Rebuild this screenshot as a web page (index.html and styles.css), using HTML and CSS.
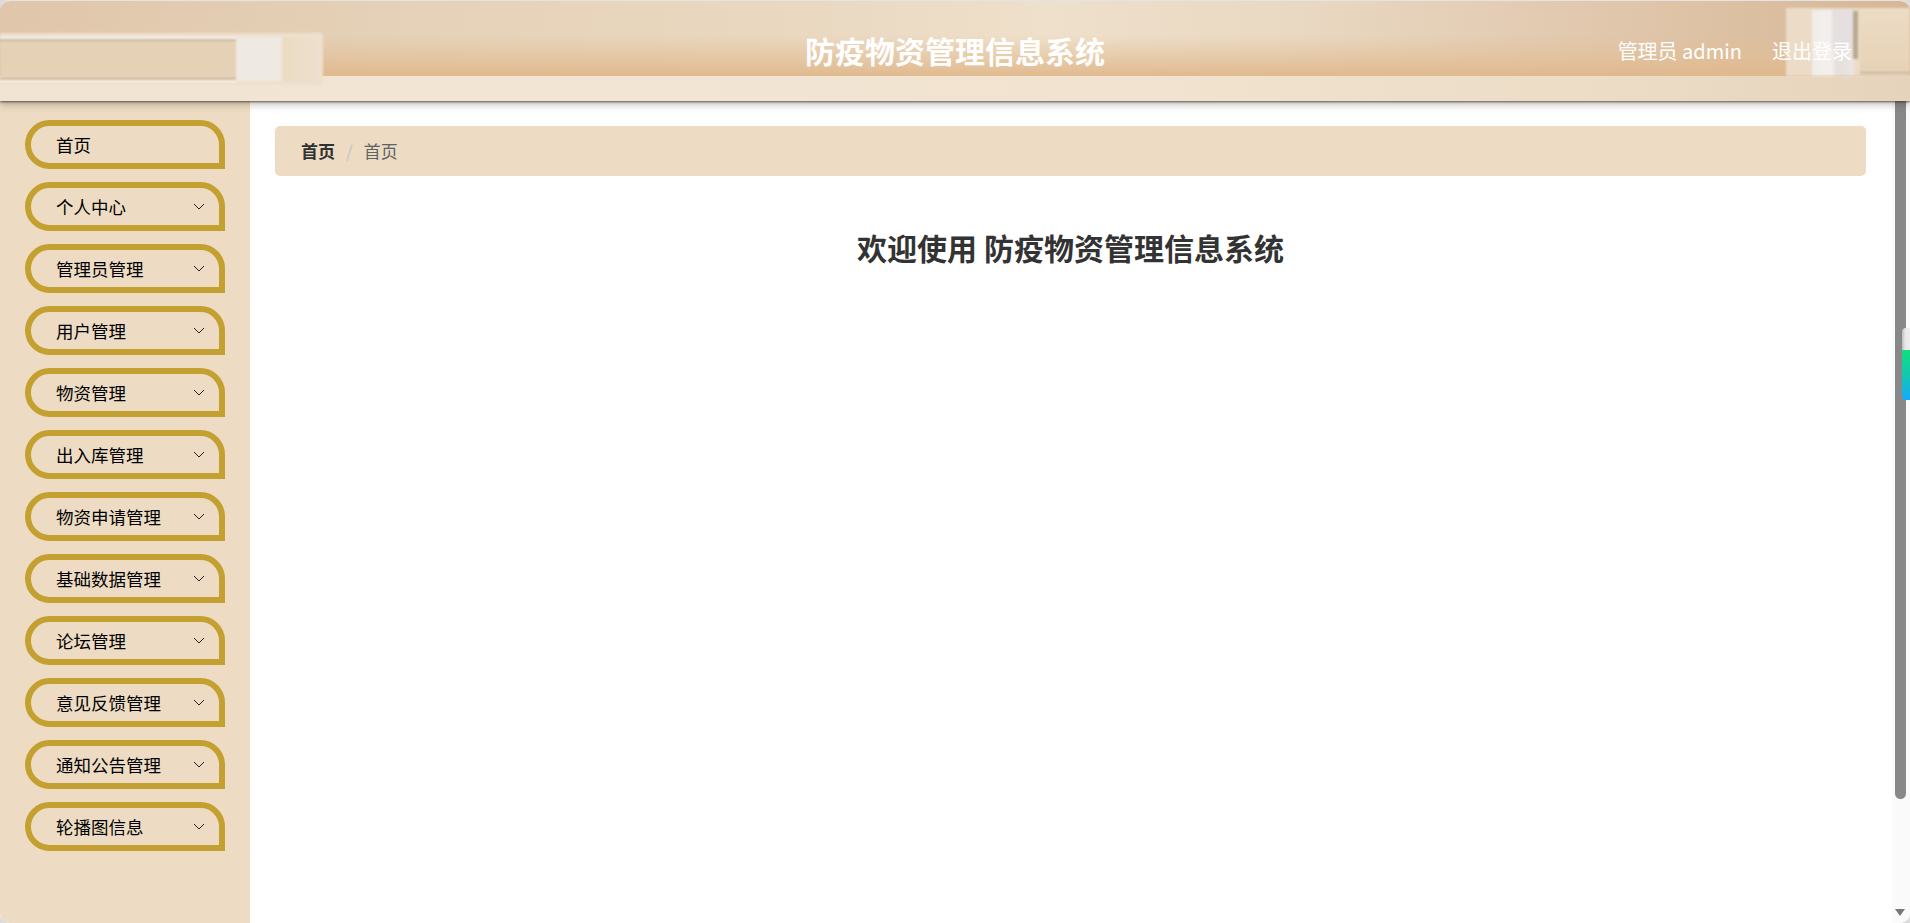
FILE: index.html
```html
<!DOCTYPE html>
<html lang="zh-CN">
<head>
<meta charset="utf-8">
<title>防疫物资管理信息系统</title>
<link rel="stylesheet" href="styles.css">
</head>
<body>
<div class="window">
  <header class="topbar">
    <div class="deco-left">
      <div class="deco-left-panel"></div>
      <div class="deco-left-white"></div>
      <div class="deco-left-end"></div>
    </div>
    <div class="deco-right">
      <div class="deco-right-white"></div>
      <div class="deco-right-lilac"></div>
      <div class="deco-right-bar"></div>
      <div class="deco-right-panel"></div>
    </div>
    <h1 class="brand">防疫物资管理信息系统</h1>
    <div class="user">
      <span class="user-name">管理员 admin</span>
      <span class="logout">退出登录</span>
    </div>
  </header>
  <div class="body">
    <nav class="sidebar">
      <div class="menu-item"><span>首页</span></div>
      <div class="menu-item"><span>个人中心</span><svg class="chev" viewBox="0 0 12 7"><path d="M1 1l5 5 5-5"/></svg></div>
      <div class="menu-item"><span>管理员管理</span><svg class="chev" viewBox="0 0 12 7"><path d="M1 1l5 5 5-5"/></svg></div>
      <div class="menu-item"><span>用户管理</span><svg class="chev" viewBox="0 0 12 7"><path d="M1 1l5 5 5-5"/></svg></div>
      <div class="menu-item"><span>物资管理</span><svg class="chev" viewBox="0 0 12 7"><path d="M1 1l5 5 5-5"/></svg></div>
      <div class="menu-item"><span>出入库管理</span><svg class="chev" viewBox="0 0 12 7"><path d="M1 1l5 5 5-5"/></svg></div>
      <div class="menu-item"><span>物资申请管理</span><svg class="chev" viewBox="0 0 12 7"><path d="M1 1l5 5 5-5"/></svg></div>
      <div class="menu-item"><span>基础数据管理</span><svg class="chev" viewBox="0 0 12 7"><path d="M1 1l5 5 5-5"/></svg></div>
      <div class="menu-item"><span>论坛管理</span><svg class="chev" viewBox="0 0 12 7"><path d="M1 1l5 5 5-5"/></svg></div>
      <div class="menu-item"><span>意见反馈管理</span><svg class="chev" viewBox="0 0 12 7"><path d="M1 1l5 5 5-5"/></svg></div>
      <div class="menu-item"><span>通知公告管理</span><svg class="chev" viewBox="0 0 12 7"><path d="M1 1l5 5 5-5"/></svg></div>
      <div class="menu-item"><span>轮播图信息</span><svg class="chev" viewBox="0 0 12 7"><path d="M1 1l5 5 5-5"/></svg></div>
    </nav>
    <main class="main">
      <div class="crumbs">
        <span class="crumb-strong">首页</span>
        <span class="crumb-sep">/</span>
        <span class="crumb-page">首页</span>
      </div>
      <h2 class="welcome">欢迎使用 防疫物资管理信息系统</h2>
    </main>
    <div class="scroll">
      <div class="scroll-thumb"></div>
      <div class="scroll-arrow"></div>
      <div class="side-widget"><div class="side-widget-top"></div><div class="side-widget-color"></div></div>
    </div>
  </div>
</div>
</body>
</html>
```
FILE: styles.css
```css
* { box-sizing: border-box; }
html, body { margin: 0; height: 100%; }
body {
  background: #dcdcdc;
  overflow: hidden;
  font-family: "Noto Sans CJK SC", "Noto Sans", sans-serif;
}
.window {
  height: 923px;
  display: flex;
  flex-direction: column;
  background: #fff;
  border-top: 1px solid #e4e4e4;
  border-radius: 10px;
  overflow: hidden;
}
.topbar {
  position: relative;
  z-index: 2;
  flex: 0 0 100px;
  display: flex;
  align-items: flex-start;
  justify-content: center;
  box-shadow: 0 1px 2px rgba(50,42,34,.7), 0 4px 7px rgba(60,50,40,.28);
  background:
    linear-gradient(90deg, #f2e4d2 0, #f2e5d4 30%, #f1e3cf 60%, #ecdcc6 85%, #e6d3bb 100%) left bottom / 100% 25px no-repeat,
    linear-gradient(180deg, rgba(224,178,128,0) 34%, rgba(226,190,148,.55) 55%, rgba(224,184,140,.95) 75%),
    linear-gradient(90deg, #e0c6aa 0, #e5d2b8 22%, #e9d7bf 40%, #efe0cb 55%, #e9d8c2 68%, #e0c6ab 85%, #d6b795 100%);
}
.deco-left {
  position: absolute;
  left: 0;
  top: 32px;
  width: 323px;
  height: 52px;
  background: #eee0cd;
  filter: blur(.8px);
}
.deco-left-panel {
  position: absolute;
  left: 0;
  top: 6px;
  width: 236px;
  height: 41px;
  background: #e5d2b6;
  border-top: 2px solid #c9b69c;
  border-bottom: 2px solid #c9b69c;
  box-shadow: 0 -2px 0 #faf6f0, 0 2px 0 #faf6f0;
}
.deco-left-white {
  position: absolute;
  left: 236px;
  top: 4px;
  width: 45px;
  height: 44px;
  background: #eee9e3;
}
.deco-left-end {
  position: absolute;
  left: 283px;
  top: 5px;
  width: 37px;
  height: 43px;
  background: linear-gradient(90deg, #e9dcc0, #efdfcf);
}
.deco-right {
  position: absolute;
  left: 1786px;
  top: 7px;
  width: 124px;
  height: 68px;
  background: #ecdcc7;
  filter: blur(1px);
}
.deco-right-white {
  position: absolute;
  left: 26px;
  top: 2px;
  width: 42px;
  height: 66px;
  background: linear-gradient(90deg, #f1ede8 0, #f3f0ee 45%, #e6dfdc 60%, #ebe6e2 100%);
}
.deco-right-lilac {
  position: absolute;
  left: 46px;
  top: 2px;
  width: 22px;
  height: 40px;
  background: #e6dfdf;
}
.deco-right-bar {
  position: absolute;
  left: 67px;
  top: 3px;
  width: 5px;
  height: 48px;
  background: #b8aa92;
}
.deco-right-panel {
  position: absolute;
  left: 74px;
  top: 4px;
  right: 0;
  height: 62px;
  background: linear-gradient(180deg, #ecdcc4, #e6d2b6);
  border-bottom: 2px solid #c8b69e;
}
.brand {
  position: relative;
  margin: 27px 0 0;
  color: #fff;
  font-size: 30px;
  line-height: 44px;
  font-weight: 700;
}
.user {
  position: absolute;
  top: 36px;
  right: 58px;
  display: flex;
  gap: 30px;
  color: #fff;
  font-size: 20px;
  line-height: 28px;
}
.body {
  flex: 1;
  display: flex;
  min-height: 0;
}
.sidebar {
  flex: 0 0 250px;
  display: flex;
  flex-direction: column;
  gap: 13px;
  padding: 19px 0 0 25px;
  background: #eddcc3;
}
.menu-item {
  width: 200px;
  height: 49px;
  display: flex;
  align-items: center;
  justify-content: space-between;
  padding: 0 14px 1px 25px;
  border: 6px solid #c3a02f;
  border-radius: 25px 25px 0 25px;
  color: #000;
  font-size: 17.5px;
  white-space: nowrap;
}
.chev {
  width: 12px;
  height: 7px;
  fill: none;
  stroke: #222;
  stroke-width: 1;
}
.main {
  flex: 1;
  min-width: 0;
  padding: 25px 26px 0 25px;
}
.crumbs {
  height: 50px;
  display: flex;
  align-items: center;
  padding: 0 0 2px 26px;
  background: #eddcc3;
  border-radius: 5px;
  font-size: 17px;
}
.crumb-strong { color: #303133; font-weight: 700; }
.crumb-sep { margin: 0 11px; color: #c0c4cc; }
.crumb-page { color: #606266; }
.welcome {
  margin: 49px 0 0;
  text-align: center;
  color: #333;
  font-size: 30px;
  line-height: 44px;
  font-weight: 700;
}
.scroll {
  position: relative;
  flex: 0 0 18px;
  background: #fafafa;
}
.scroll-thumb {
  width: 11px;
  height: 698px;
  margin-left: 3px;
  background: #888;
  border-radius: 0 0 6px 6px;
}
.scroll-arrow {
  margin: 110px 0 0 3px;
  width: 0;
  height: 0;
  border-left: 5px solid transparent;
  border-right: 5px solid transparent;
  border-top: 7px solid #777;
}
.side-widget {
  position: absolute;
  left: 10px;
  top: 227px;
  width: 8px;
}
.side-widget-top {
  height: 22px;
  background: linear-gradient(90deg, #bdbdbd 0, #e8e8e8 40%, #eee 100%);
  border-radius: 4px 0 0 0;
}
.side-widget-color {
  height: 50px;
  background: linear-gradient(180deg, #0fe07c 0, #12c7b0 50%, #16a8ff 100%);
  border-radius: 0 0 0 4px;
}
```
